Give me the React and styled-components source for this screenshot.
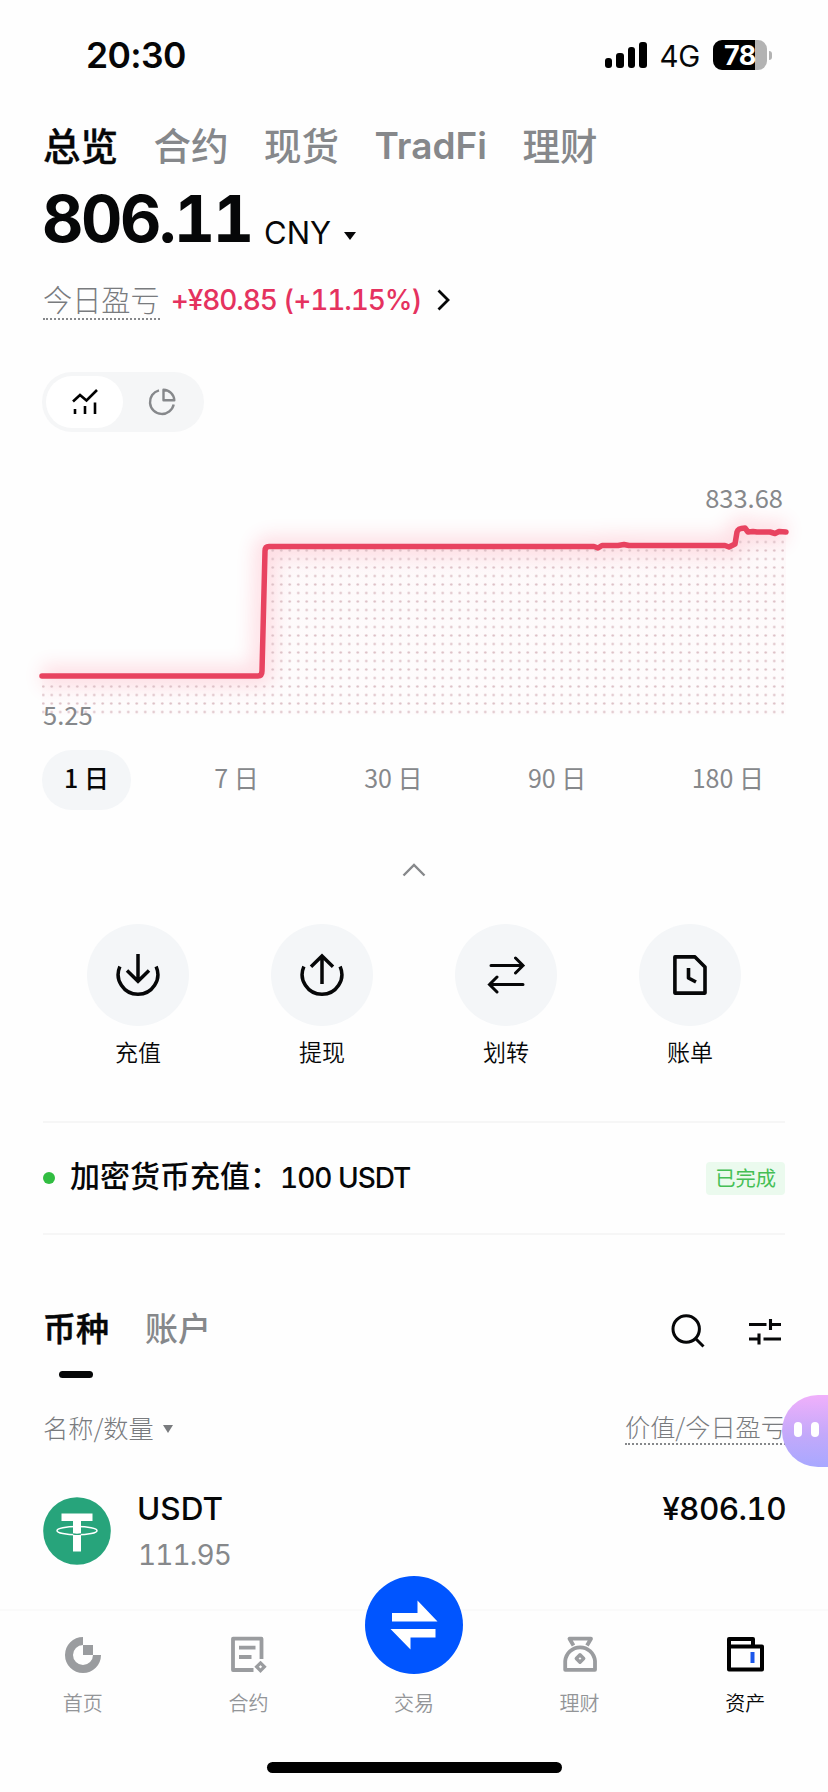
import styled, { createGlobalStyle } from "styled-components";

const GlobalStyle = createGlobalStyle`
  * {
    box-sizing: border-box;
  }

  body {
    margin: 0;
    background-color: #fefefe;
    color: #060708;
    font-family: "Noto Sans CJK SC", sans-serif;
  }
`;

const Screen = styled.div`
  display: flex;
  flex-direction: column;
  width: 828px;
  height: 1792px;
  overflow: hidden;
  position: relative;
  background-color: #fefefe;
`;

/* Barra de estado */
const StatusBar = styled.header`
  display: flex;
  align-items: center;
  height: 108px;
  padding: 2px 56px 0 86px;
  font-family: Inter, sans-serif;
`;

const Clock = styled.span`
  flex: 1;
  font-size: 35.5px;
  font-weight: 600;
  letter-spacing: -0.6px;
`;

const Signal = styled.div`
  display: flex;
  align-items: flex-end;
  gap: 4px;
`;

const SignalBar = styled.span`
  width: 7.5px;
  height: ${(props) => props.$height}px;
  border-radius: 3px;
  background-color: #000;
`;

const Network = styled.span`
  margin: 1px 13px 0 13px;
  font-size: 29.5px;
  letter-spacing: -0.3px;
`;

const Battery = styled.div`
  display: flex;
  align-items: center;
  justify-content: center;
  width: 54px;
  height: 30px;
  border-radius: 9px;
  background: linear-gradient(90deg, #000 42px, #b3b3b3 42px);
  color: #fff;
  font-size: 27px;
  font-weight: 700;
  letter-spacing: -0.5px;
`;

const BatteryTip = styled.span`
  width: 3px;
  height: 9px;
  margin-left: 2px;
  border-radius: 0 4px 4px 0;
  background-color: #b3b3b3;
`;

/* Cabecera */
const TopTabs = styled.nav`
  display: flex;
  align-items: center;
  gap: 35.5px;
  height: 72px;
  padding-left: 43px;
`;

const TopTab = styled.span`
  font-size: 37.5px;
  font-weight: 500;
  line-height: 72px;
  color: ${(props) => (props.$active ? "#060708" : "#86888b")};
  -webkit-text-stroke: ${(props) => (props.$active ? "0.4px" : "0")} currentColor;
`;

const LatinTab = styled(TopTab)`
  font-family: Inter, sans-serif;
  font-size: 37px;
  font-weight: 600;
  padding-top: 3px;
`;

const Balance = styled.div`
  display: flex;
  align-items: baseline;
  height: 91px;
  margin-top: -1px;
  padding-left: 42px;
`;

const Amount = styled.span`
  width: 209px;
  font-family: Inter, sans-serif;
  font-size: 64px;
  font-weight: 700;
  font-variant-numeric: tabular-nums;
  letter-spacing: -2.4px;
  line-height: 80px;
`;

const Currency = styled.span`
  margin: 0 13px 0 13px;
  font-family: Inter, sans-serif;
  font-size: 31px;
  position: relative;
  top: 2px;
`;

const Caret = styled.span`
  align-self: ${(props) => (props.$big ? "flex-start" : "center")};
  margin-top: ${(props) => (props.$big ? 53 : 4)}px;
  border: solid transparent;
  border-width: ${(props) => (props.$big ? "8px 6px 0" : "8px 5.5px 0")};
  border-top-color: currentColor;
`;

const PnlRow = styled.div`
  display: flex;
  align-items: center;
  height: 60px;
  padding-left: 43px;
`;

const PnlLabel = styled.span`
  font-size: 29.2px;
  font-weight: 300;
  line-height: 36px;
  padding-bottom: 2px;
  color: #797b7e;
  border-bottom: 2px dotted #86888b;
`;

const PnlValue = styled.span`
  width: 249px;
  margin: 0 17px 0 11px;
  font-family: Inter, sans-serif;
  font-size: 28px;
  font-weight: 500;
  font-variant-numeric: tabular-nums;
  letter-spacing: -1.1px;
  line-height: 38px;
  white-space: nowrap;
  color: #e5325f;
`;

const Toggle = styled.div`
  display: flex;
  width: 162px;
  height: 60px;
  margin: 42px 0 0 42px;
  padding: 4px;
  border-radius: 30px;
  background-color: #f5f6f7;
`;

const ToggleItem = styled.div`
  display: flex;
  flex: 1;
  align-items: center;
  justify-content: center;
  border-radius: 26px;
  color: ${(props) => (props.$active ? "#000" : "#86888b")};
  background-color: ${(props) => (props.$active ? "#fff" : "transparent")};
`;

/* Grafico */
const ChartBox = styled.section`
  height: 318px;
`;

const Ranges = styled.div`
  display: flex;
  justify-content: space-between;
  height: 60px;
  padding: 0 42px;
`;

const Range = styled.span`
  padding: 0 22px;
  border-radius: 30px;
  font-size: 25px;
  font-weight: ${(props) => (props.$active ? 500 : 400)};
  line-height: 55px;
  color: ${(props) => (props.$active ? "#060708" : "#86888b")};
  background-color: ${(props) => (props.$active ? "#f4f6f8" : "transparent")};
`;

const Collapse = styled.div`
  display: flex;
  justify-content: center;
  height: 114px;
  padding-top: 53px;
`;

/* Acciones */
const Actions = styled.section`
  display: grid;
  grid-template-columns: repeat(4, 1fr);
  height: 197px;
  padding: 0 46px;
`;

const Action = styled.div`
  display: flex;
  flex-direction: column;
  align-items: center;
  font-size: 23px;
  font-weight: 350;
  line-height: 34px;
`;

const ActionCircle = styled.div`
  display: flex;
  align-items: center;
  justify-content: center;
  width: 102px;
  height: 102px;
  margin-bottom: 8px;
  border-radius: 50%;
  background-color: #f4f6f8;
`;

const Notice = styled.section`
  display: flex;
  align-items: center;
  height: 114px;
  margin: 0 43px;
  border-top: 2px solid #f6f6f6;
  border-bottom: 2px solid #f6f6f6;
`;

const Dot = styled.span`
  width: 12px;
  height: 12px;
  border-radius: 50%;
  background-color: #31bd41;
`;

const NoticeText = styled.span`
  display: flex;
  flex: 1;
  margin: -5px 0 0 15px;
  font-size: 30px;
  font-weight: 500;
  line-height: 40px;
`;

const NoticeAmount = styled.span`
  padding-top: 4px;
  font-family: Inter, sans-serif;
  font-size: 28px;
  font-variant-numeric: tabular-nums;
  letter-spacing: -1px;
`;

const Badge = styled.span`
  padding: 0 9px 2px;
  border-radius: 4px;
  font-size: 20.3px;
  line-height: 31px;
  color: #45bf55;
  background-color: #ebfaee;
`;

/* Lista de activos */
const AssetTabs = styled.div`
  display: flex;
  align-items: flex-start;
  height: 162px;
  padding: 66px 46px 0 43px;
`;

const AssetTab = styled.div`
  display: flex;
  flex-direction: column;
  align-items: center;
  gap: 18px;
  margin-right: 36px;
  font-size: 33px;
  font-weight: 500;
  line-height: 52px;
  color: ${(props) => (props.$active ? "#060708" : "#86888b")};
  -webkit-text-stroke: ${(props) => (props.$active ? "0.5px" : "0")} currentColor;
`;

const Underline = styled.span`
  width: 34px;
  height: 7px;
  border-radius: 4px;
  background-color: #060708;
`;

const Tools = styled.div`
  display: flex;
  flex: 1;
  justify-content: flex-end;
  gap: 44px;
  padding-top: 13px;
`;

const ListHeader = styled.div`
  display: flex;
  justify-content: space-between;
  height: 60px;
  padding: 0 42px 0 43px;
  align-items: center;
  font-size: 25.2px;
  font-weight: 300;
  line-height: 32px;
  color: #797b7e;
`;

const SortLabel = styled.span`
  display: flex;
  gap: 9px;
`;

const DottedLabel = styled.span`
  padding-bottom: 1px;
  border-bottom: 2px dotted #86888b;
`;

const AssetRow = styled.div`
  display: flex;
  align-items: flex-start;
  height: 152px;
  padding: 40px 42px 0 43px;
`;

const AssetInfo = styled.div`
  display: flex;
  flex: 1;
  flex-direction: column;
  margin-left: 26px;
`;

const AssetName = styled.span`
  margin-top: -8px;
  font-family: Inter, sans-serif;
  font-size: 31.5px;
  font-weight: 500;
  line-height: 40px;
`;

const AssetQty = styled.span`
  margin: 4px 0 0 1px;
  font-family: Inter, sans-serif;
  font-size: 28px;
  font-variant-numeric: tabular-nums;
  letter-spacing: -0.9px;
  line-height: 44px;
  color: #86888b;
`;

const AssetValue = styled.span`
  margin-top: -8px;
  font-family: Inter, sans-serif;
  font-size: 31.5px;
  font-weight: 500;
  font-variant-numeric: tabular-nums;
  letter-spacing: -0.6px;
  line-height: 40px;
`;

/* Navegacion inferior */
const BottomNav = styled.nav`
  display: grid;
  grid-template-columns: repeat(5, 1fr);
  height: 153px;
  border-top: 2px solid #fafafa;
`;

const NavItem = styled.div`
  display: flex;
  flex-direction: column;
  align-items: center;
  padding-top: 24px;
  font-size: 20px;
  font-weight: 350;
  line-height: 30px;
  color: ${(props) => (props.$active ? "#060708" : "#939598")};
`;

const NavIcon = styled.div`
  display: flex;
  justify-content: center;
  height: 53px;
`;

const TradeButton = styled.div`
  display: flex;
  align-items: center;
  justify-content: center;
  flex: none;
  width: 98px;
  height: 98px;
  margin-top: -59px;
  border-radius: 50%;
  background-color: #0055ff;
`;

const HomeIndicator = styled.div`
  width: 295px;
  height: 11px;
  margin: 0 auto;
  border-radius: 6px;
  background-color: #000;
`;

const Assistant = styled.div`
  position: absolute;
  top: 1395px;
  right: 0;
  display: flex;
  align-items: center;
  gap: 9px;
  width: 46px;
  height: 72px;
  padding: 0 0 0 12px;
  border-radius: 36px 0 0 36px;
  background: linear-gradient(180deg, #f0b0fb 0%, #c3a9fa 55%, #a8a8ff 100%);
`;

const Eye = styled.span`
  width: 8px;
  height: 15px;
  margin-top: -3px;
  border-radius: 4px;
  background-color: #fff;
`;

const LINE =
  "M42 226 H258 Q262 226 262 221 L265 101 Q265 96.5 269 96.5 H594 L598 98 L602 95.5 H618 L624 94.5 L629 95.5 H725 L729 97 L735 94 L737 82 Q738 78 745 78 L748 82 L753 81.5 L757 82 H770 L775 83.5 L779 81.5 L786 82";

const Chart = () => (
  <svg width="828" height="318" viewBox="0 -18 828 318">
    <defs>
      <pattern id="dots" x="39" y="257.75" width="8.5" height="8.5" patternUnits="userSpaceOnUse">
        <circle cx="4.25" cy="4.25" r="1.25" fill="#dcbfc5" />
      </pattern>
      <linearGradient id="area" x1="0" y1="0" x2="0" y2="1">
        <stop offset="0" stopColor="#f0476a" stopOpacity="0.03" />
        <stop offset="1" stopColor="#f0476a" stopOpacity="0.01" />
      </linearGradient>
      <filter id="glow" x="-10%" y="-40%" width="120%" height="180%">
        <feGaussianBlur stdDeviation="9" />
      </filter>
    </defs>
    <path d={`${LINE} V265 H42 Z`} fill="url(#area)" />
    <path d={LINE} fill="none" stroke="#ff4468" strokeWidth="22" opacity="0.16" filter="url(#glow)" />
    <path d="M42 232 H266 V99 H734 V87 H784 V265 H42 Z" fill="url(#dots)" />
    <path d={LINE} fill="none" stroke="#e84360" strokeWidth="5.5" strokeLinecap="round" strokeLinejoin="round" />
    <text x="783" y="58" textAnchor="end" fontSize="25.5" fill="#86888b">
      833.68
    </text>
    <text x="43" y="275" fontSize="25.5" fill="#86888b">
      5.25
    </text>
  </svg>
);

const TrendIcon = () => (
  <svg width="26" height="26" viewBox="0 0 26 26" fill="none" stroke="currentColor" strokeWidth="2.6">
    <path d="M1 12.5 L8 6 L14.5 11.5 L25 1" />
    <path d="M3 20 V25 M13 17 V25 M23 13.5 V25" />
  </svg>
);

const PieIcon = () => (
  <svg width="30" height="30" viewBox="0 0 30 30" fill="none" stroke="currentColor" strokeWidth="2.4">
    <path d="M12 3.3 A12 12 0 1 0 26.7 17.5" />
    <path d="M16.5 2.8 A11 11 0 0 1 27.3 13.3 H16.5 Z" strokeLinejoin="round" />
  </svg>
);

const DepositIcon = () => (
  <svg width="46" height="46" viewBox="0 0 46 46" fill="none" stroke="#060708" strokeWidth="3.5">
    <path d="M4.9 14.5 A19.8 19.8 0 1 0 41.1 14.5" />
    <path d="M23 2 V29 M12 18.5 L23 29.2 L34 18.5" />
  </svg>
);

const WithdrawIcon = () => (
  <svg width="46" height="46" viewBox="0 0 46 46" fill="none" stroke="#060708" strokeWidth="3.5">
    <path d="M4.9 14.5 A19.8 19.8 0 1 0 41.1 14.5" />
    <path d="M23 32 V4 M12 14.7 L23 4 L34 14.7" />
  </svg>
);

const TransferIcon = () => (
  <svg width="40" height="40" viewBox="0 0 40 40" fill="none" stroke="#060708" strokeWidth="3" strokeLinecap="round">
    <path d="M5 10.5 H37 M29.5 3 L37 10.5 L29.5 18" />
    <path d="M37 29.5 H3.5 M11 22 L3.5 29.5 L11 37" />
  </svg>
);

const BillIcon = () => (
  <svg width="36" height="42" viewBox="0 0 36 42" fill="none" stroke="#060708" strokeWidth="3.6" strokeLinejoin="round">
    <path d="M2.9 2.9 H23 L33 12.9 V39.1 H2.9 Z" />
    <path d="M16.5 14 V24 L24 28" />
  </svg>
);

const SearchIcon = () => (
  <svg width="34" height="34" viewBox="0 0 34 34" fill="none" stroke="#060708" strokeWidth="3">
    <circle cx="15.2" cy="15" r="13.2" />
    <path d="M24.5 24.5 L32.5 32.5" />
  </svg>
);

const FilterIcon = () => (
  <svg width="33" height="34" viewBox="0 0 33 34" fill="none" stroke="#060708" strokeWidth="3.1">
    <path d="M0 10.5 H17.5 M21.5 10.5 H32 M21.5 5 V16" />
    <path d="M0 25 H10 M14.5 25 H32 M10 19.5 V30.5" />
  </svg>
);

const TetherIcon = () => (
  <svg width="68" height="68" viewBox="0 0 68 68">
    <circle cx="34" cy="34" r="33.8" fill="#27a47b" />
    <path d="M18.5 16.5 H49.5 V24 H38 V54.5 H30 V24 H18.5 Z" fill="#fff" />
    <ellipse cx="34" cy="33.7" rx="20" ry="4.1" fill="none" stroke="#fff" strokeWidth="1.5" />
    <path d="M30 36.8 Q34 37.8 38 36.8" fill="none" stroke="#27a47b" strokeWidth="1.3" />
  </svg>
);

const HomeIcon = () => (
  <svg width="38" height="38" viewBox="0 0 38 38" fill="#9a9c9f">
    <path d="M19 2 V10 A10 10 0 1 0 29 20 H37 A18 18 0 1 1 19 2 Z" />
    <rect x="19" y="10" width="10" height="10" />
  </svg>
);

const ContractIcon = () => (
  <svg width="38" height="38" viewBox="0 0 38 38" fill="none" stroke="#9a9c9f" strokeWidth="3.8">
    <path d="M32.5 24 V3.7 H4 V35 H24.5" strokeLinejoin="round" />
    <path d="M10 12.7 H26.5 M10 22 H22.5" />
    <path d="M31.5 27.9 L35.4 31.8 L31.5 35.7 L27.6 31.8 Z" strokeWidth="3.2" />
  </svg>
);

const TradeIcon = () => (
  <svg width="48" height="50" viewBox="0 0 48 50" fill="#fff">
    <path d="M2 13 H27.5 V0.5 L47.5 21.5 H2 Z" />
    <path d="M0.5 29 H45.5 V37.5 H20.5 V49.5 Z" />
  </svg>
);

const EarnIcon = () => (
  <svg width="36" height="38" viewBox="0 0 36 38" fill="none" stroke="#9a9c9f" strokeWidth="3.8" strokeLinejoin="round">
    <path d="M11.5 10.5 L7.5 3.7 H29 L25 10.5" />
    <path d="M3.2 34.8 V26 A15 15.5 0 0 1 33 26 V34.8 Z" />
    <path d="M18 19.8 L21.7 23.5 L18 27.2 L14.3 23.5 Z" strokeWidth="3.4" />
  </svg>
);

const WalletIcon = () => (
  <svg width="38" height="38" viewBox="0 0 38 38" fill="none" stroke="#000" strokeWidth="4" strokeLinejoin="round">
    <path d="M3 11.5 V4 H27 V11.5" />
    <path d="M3 11.5 H36 V34.5 H3 Z" />
    <path d="M26.5 17 V28" stroke="#1b56ea" />
  </svg>
);

const App = () => {
  return (
    <>
      <GlobalStyle />
      <Screen>
        <StatusBar>
          <Clock>20:30</Clock>
          <Signal>
            <SignalBar $height={10} />
            <SignalBar $height={15} />
            <SignalBar $height={21} />
            <SignalBar $height={26} />
          </Signal>
          <Network>4G</Network>
          <Battery>78</Battery>
          <BatteryTip />
        </StatusBar>

        <TopTabs>
          <TopTab $active>总览</TopTab>
          <TopTab>合约</TopTab>
          <TopTab>现货</TopTab>
          <LatinTab>TradFi</LatinTab>
          <TopTab>理财</TopTab>
        </TopTabs>

        <Balance>
          <Amount>806.11</Amount>
          <Currency>CNY</Currency>
          <Caret $big />
        </Balance>

        <PnlRow>
          <PnlLabel>今日盈亏</PnlLabel>
          <PnlValue>+¥80.85 (+11.15%)</PnlValue>
          <svg width="14" height="22" viewBox="0 0 14 22" fill="none" stroke="#060708" strokeWidth="2.8">
            <path d="M1.5 1.5 L11 11 L1.5 20.5" />
          </svg>
        </PnlRow>

        <Toggle>
          <ToggleItem $active>
            <TrendIcon />
          </ToggleItem>
          <ToggleItem>
            <PieIcon />
          </ToggleItem>
        </Toggle>

        <ChartBox>
          <Chart />
        </ChartBox>

        <Ranges>
          <Range $active>1 日</Range>
          <Range>7 日</Range>
          <Range>30 日</Range>
          <Range>90 日</Range>
          <Range>180 日</Range>
        </Ranges>

        <Collapse>
          <svg width="24" height="14" viewBox="0 0 24 14" fill="none" stroke="#86888b" strokeWidth="2.4">
            <path d="M1.5 12.5 L12 2 L22.5 12.5" />
          </svg>
        </Collapse>

        <Actions>
          <Action>
            <ActionCircle>
              <DepositIcon />
            </ActionCircle>
            充值
          </Action>
          <Action>
            <ActionCircle>
              <WithdrawIcon />
            </ActionCircle>
            提现
          </Action>
          <Action>
            <ActionCircle>
              <TransferIcon />
            </ActionCircle>
            划转
          </Action>
          <Action>
            <ActionCircle>
              <BillIcon />
            </ActionCircle>
            账单
          </Action>
        </Actions>

        <Notice>
          <Dot />
          <NoticeText>
            加密货币充值：<NoticeAmount>100 USDT</NoticeAmount>
          </NoticeText>
          <Badge>已完成</Badge>
        </Notice>

        <AssetTabs>
          <AssetTab $active>
            币种
            <Underline />
          </AssetTab>
          <AssetTab>账户</AssetTab>
          <Tools>
            <SearchIcon />
            <FilterIcon />
          </Tools>
        </AssetTabs>

        <ListHeader>
          <SortLabel>
            名称/数量
            <Caret />
          </SortLabel>
          <DottedLabel>价值/今日盈亏</DottedLabel>
        </ListHeader>

        <AssetRow>
          <TetherIcon />
          <AssetInfo>
            <AssetName>USDT</AssetName>
            <AssetQty>111.95</AssetQty>
          </AssetInfo>
          <AssetValue>¥806.10</AssetValue>
        </AssetRow>

        <BottomNav>
          <NavItem>
            <NavIcon>
              <HomeIcon />
            </NavIcon>
            首页
          </NavItem>
          <NavItem>
            <NavIcon>
              <ContractIcon />
            </NavIcon>
            合约
          </NavItem>
          <NavItem>
            <NavIcon>
              <TradeButton>
                <TradeIcon />
              </TradeButton>
            </NavIcon>
            交易
          </NavItem>
          <NavItem>
            <NavIcon>
              <EarnIcon />
            </NavIcon>
            理财
          </NavItem>
          <NavItem $active>
            <NavIcon>
              <WalletIcon />
            </NavIcon>
            资产
          </NavItem>
        </BottomNav>
        <HomeIndicator />

        <Assistant>
          <Eye />
          <Eye />
        </Assistant>
      </Screen>
    </>
  );
};

export default App;
